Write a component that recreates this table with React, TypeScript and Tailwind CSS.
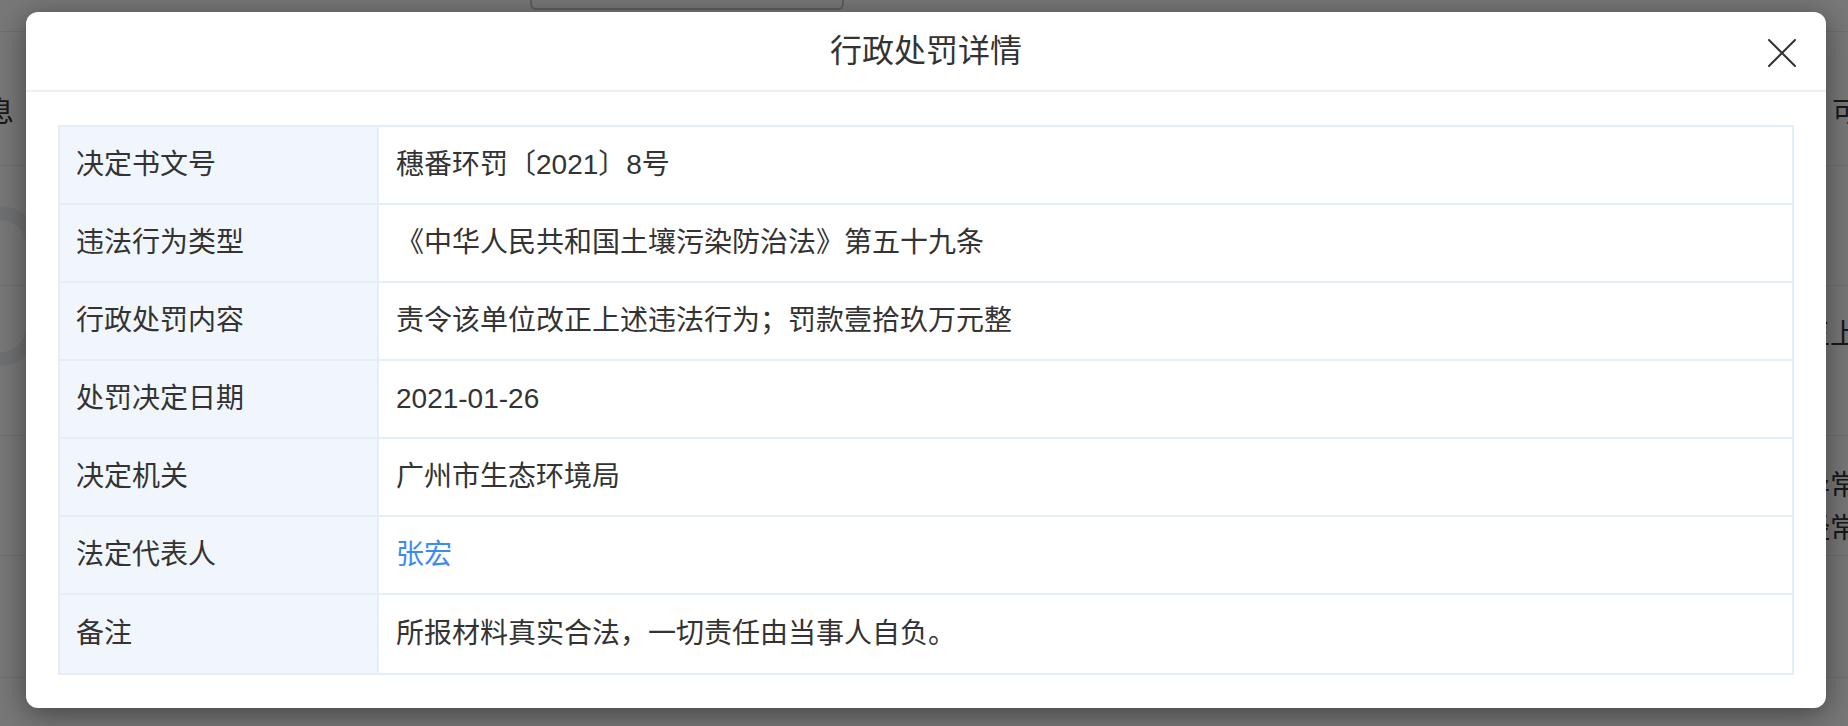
const rows: { label: string; value: string; link?: boolean }[] = [
  { label: '决定书文号', value: '穗番环罚〔2021〕8号' },
  { label: '违法行为类型', value: '《中华人民共和国土壤污染防治法》第五十九条' },
  { label: '行政处罚内容', value: '责令该单位改正上述违法行为；罚款壹拾玖万元整' },
  { label: '处罚决定日期', value: '2021-01-26' },
  { label: '决定机关', value: '广州市生态环境局' },
  { label: '法定代表人', value: '张宏', link: true },
  { label: '备注', value: '所报材料真实合法，一切责任由当事人自负。' },
]

export default function App() {
  return (
    <div
      className="relative h-[726px] w-full overflow-hidden bg-white text-[#333]"
      style={{ fontFamily: '"Liberation Sans", "Noto Sans CJK SC", sans-serif' }}
    >
      {/* page under the mask */}
      <div className="flex flex-col">
        <div className="flex h-[32px] border-b border-[#ececec] pl-[530px]">
          <div className="h-[10px] w-[314px] rounded-b-md border-2 border-t-0 border-[#c8c8c8]" />
        </div>
        <div className="flex h-[134px] items-start justify-between border-b border-[#ececec] pt-[61px] text-[28px] leading-[40px]">
          <span className="-ml-[14px]">息</span>
          <span className="-mr-[12px]">可</span>
        </div>
        <div className="flex h-[120px] border-b border-[#ececec]">
          <div className="-ml-[40px] mt-[40px] h-[160px] w-[80px] rounded-full border-[14px] border-[#eef1f5]" />
        </div>
        <div className="flex h-[150px] items-start justify-end border-b border-[#ececec] pt-[29px] text-[28px] leading-[40px]">
          <span className="-mr-[10px]">王上</span>
        </div>
        <div className="flex h-[120px] flex-col items-end border-b border-[#ececec] pt-[28px] text-[28px] leading-[43px]">
          <span className="-mr-[10px]">异常</span>
          <span className="-mr-[10px]">经常</span>
        </div>
        <div className="h-[122px] border-b border-[#ececec]" />
      </div>

      {/* mask */}
      <div className="absolute inset-0 bg-black/[0.53]" />

      {/* dialog */}
      <div className="absolute left-[26px] top-[12px] w-[1800px] rounded-[12px] bg-white shadow-[0_6px_30px_rgba(0,0,0,0.45)]">
        <div className="relative flex h-[80px] items-center justify-center border-b-2 border-[#f0f0f0]">
          <h2 className="text-[32px] font-normal leading-none text-[#333]">行政处罚详情</h2>
          <button className="absolute right-[30px] top-[27px] flex h-[28px] w-[28px] items-center justify-center text-[#333]">
            <svg width="28" height="28" viewBox="0 0 28 28" fill="none" stroke="currentColor" strokeWidth="2" strokeLinecap="round">
              <path d="M1 1L27 27M27 1L1 27" />
            </svg>
          </button>
        </div>

        <div className="px-[32px] pb-[33px] pt-[33px]">
          <div className="border-2 border-[#e5edf6]">
            {rows.map((r, i) => (
              <div
                key={r.label}
                className={`flex h-[78px] text-[28px] ${i < rows.length - 1 ? 'border-b-2 border-[#e5edf6]' : ''}`}
              >
                <div className="flex w-[319px] shrink-0 items-center border-r-2 border-[#e5edf6] bg-[#f1f6fc] pl-[16px]">
                  {r.label}
                </div>
                <div className={`flex flex-1 items-center pl-[17px] ${r.link ? 'text-[#3a8cf4]' : ''}`}>
                  {r.value}
                </div>
              </div>
            ))}
          </div>
        </div>
      </div>
    </div>
  )
}
